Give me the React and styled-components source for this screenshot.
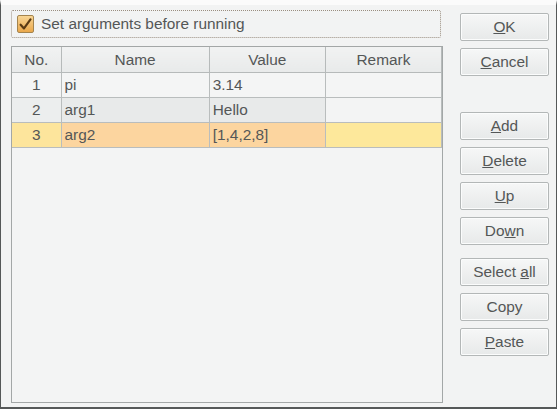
import React from "react";
import styled, { createGlobalStyle } from "styled-components";

const Global = createGlobalStyle`
  html, body { margin: 0; padding: 0; background: #f2f3f3; }
  body { font-family: "Liberation Sans", Arial, sans-serif; }
`;

const Frame = styled.div`
  box-sizing: border-box;
  width: 557px;
  height: 409px;
  background: #f2f3f3;
  border-top: 5px solid #fbfbfb;
  border-left: 1px solid #555858;
  border-right: 1px solid #555858;
  border-bottom: 2px solid #555858;
  display: flex;
  padding: 5px 0 0 10px;
  color: #545757;
  font-size: 15.4px;
`;

const LeftCol = styled.div`
  width: 432px;
  display: flex;
  flex-direction: column;
`;

const CheckGroup = styled.label`
  box-sizing: border-box;
  width: 430px;
  height: 28px;
  border: 1px dotted #9a8e80;
  border-radius: 2px;
  display: flex;
  align-items: center;
  gap: 7px;
  padding-left: 5px;
`;

const CheckBox = styled.span`
  box-sizing: border-box;
  width: 17px;
  height: 18px;
  border: 1px solid #a4844e;
  border-radius: 2px;
  background: linear-gradient(#f8d595, #eaa84c);
  display: flex;
  align-items: center;
  justify-content: center;
`;

const TableBox = styled.div`
  box-sizing: border-box;
  margin-top: 8px;
  width: 432px;
  height: 357px;
  border: 1px solid #a3a7a7;
  background: #f3f4f4;
`;

const Grid = styled.table`
  border-collapse: collapse;
  table-layout: fixed;
  width: 430px;
  font-size: 15.4px;
  color: #545757;
`;

const Th = styled.th`
  height: 25px;
  padding: 0;
  font-weight: normal;
  text-align: center;
  background: linear-gradient(#f1f2f2, #e8eaea);
  border: 1px solid #b6baba;
  border-top: none;
  &:first-child { border-left: none; }
`;

const Td = styled.td`
  height: 24px;
  padding: 0 0 0 3px;
  text-align: ${(p) => (p.$center ? "center" : "left")};
  background: ${(p) => p.$bg};
  border: 1px solid #b9bdbd;
  &:first-child { border-left: none; padding-left: 0; }
  white-space: nowrap;
  overflow: hidden;
`;

const RightCol = styled.div`
  margin-left: 17px;
  width: 89px;
  display: flex;
  flex-direction: column;
  padding-top: 3px;
`;

const Btn = styled.button`
  box-sizing: border-box;
  width: 89px;
  height: 28px;
  margin-top: ${(p) => p.$gap}px;
  border: 1px solid #b3b7b7;
  border-radius: 2px;
  background: linear-gradient(#f6f7f7, #e7e9e9);
  box-shadow: inset 0 0 0 1px #fbfcfc;
  font-family: "Liberation Sans", Arial, sans-serif;
  font-size: 15.4px;
  color: #545757;
  padding: 0;
  u { text-decoration: underline; text-underline-offset: 1px; }
`;

const rows = [
  { no: "1", name: "pi", value: "3.14", bg: ["#f4f5f5", "#f4f5f5", "#f4f5f5", "#f4f5f5"] },
  { no: "2", name: "arg1", value: "Hello", bg: ["#eceeee", "#e8eaea", "#e8eaea", "#f3f4f4"] },
  { no: "3", name: "arg2", value: "[1,4,2,8]", bg: ["#fde59c", "#fcd59f", "#fcd59f", "#fde89b"] },
];

const buttons = [
  { pre: "", u: "O", post: "K", gap: 0 },
  { pre: "", u: "C", post: "ancel", gap: 7 },
  { pre: "", u: "A", post: "dd", gap: 36 },
  { pre: "", u: "D", post: "elete", gap: 7 },
  { pre: "", u: "U", post: "p", gap: 7 },
  { pre: "Do", u: "w", post: "n", gap: 7 },
  { pre: "Select ", u: "a", post: "ll", gap: 13 },
  { pre: "Copy", u: "", post: "", gap: 7 },
  { pre: "", u: "P", post: "aste", gap: 7 },
];

export default function App() {
  return (
    <>
      <Global />
      <Frame>
        <LeftCol>
          <CheckGroup>
            <CheckBox>
              <svg width="13" height="13" viewBox="0 0 12 12">
                <path d="M1.5 6.2 L4.6 9.6 L10.6 1.2" fill="none" stroke="#5a3a14" strokeWidth="2" strokeLinecap="round" strokeLinejoin="round" />
              </svg>
            </CheckBox>
            <span>Set arguments before running</span>
          </CheckGroup>
          <TableBox>
            <Grid>
              <colgroup>
                <col style={{ width: 49 }} />
                <col style={{ width: 148 }} />
                <col style={{ width: 116 }} />
                <col style={{ width: 116 }} />
              </colgroup>
              <thead>
                <tr>
                  <Th>No.</Th>
                  <Th>Name</Th>
                  <Th>Value</Th>
                  <Th>Remark</Th>
                </tr>
              </thead>
              <tbody>
                {rows.map((r) => (
                  <tr key={r.no}>
                    <Td $center $bg={r.bg[0]}>{r.no}</Td>
                    <Td $bg={r.bg[1]}>{r.name}</Td>
                    <Td $bg={r.bg[2]}>{r.value}</Td>
                    <Td $bg={r.bg[3]}></Td>
                  </tr>
                ))}
              </tbody>
            </Grid>
          </TableBox>
        </LeftCol>
        <RightCol>
          {buttons.map((b, i) => (
            <Btn key={i} $gap={b.gap}>
              {b.pre}
              {b.u && <u>{b.u}</u>}
              {b.post}
            </Btn>
          ))}
        </RightCol>
      </Frame>
    </>
  );
}
